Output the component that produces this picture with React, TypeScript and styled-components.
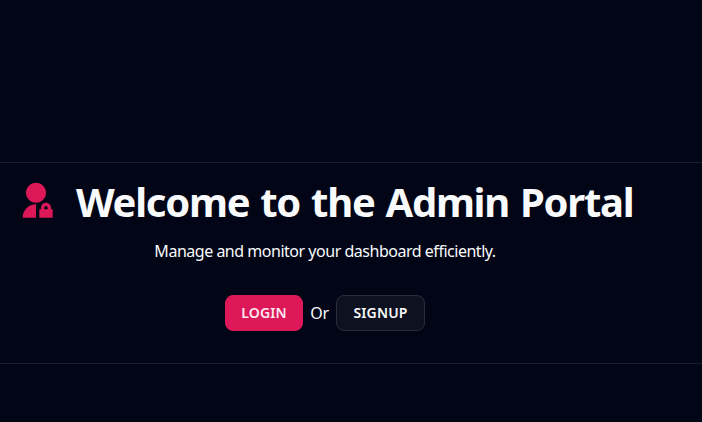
import React from "react";
import styled, { createGlobalStyle } from "styled-components";
import { RiAdminFill } from "react-icons/ri";

const GlobalStyle = createGlobalStyle`
  *, *::before, *::after { box-sizing: border-box; }
  body {
    margin: 0;
    background: #020516;
    color: #f8fafc;
    font-family: "Segoe UI", "Noto Sans", "Open Sans", sans-serif;
  }
`;

const Page = styled.main`
  height: 422px;
  padding-top: 162px;
  overflow: hidden;
`;

const Hero = styled.section`
  height: 202px;
  border-top: 1px solid #1a1d2d;
  border-bottom: 1px solid #1a1d2d;
`;

const Content = styled.div`
  width: 618px;
  margin-left: 16px;
  padding-top: 18px;
  display: flex;
  flex-direction: column;
  align-items: center;
`;

const Heading = styled.div`
  width: 100%;
  height: 40px;
  display: flex;
  align-items: center;
  gap: 20px;
`;

const AdminIcon = styled(RiAdminFill)`
  flex: none;
  width: 40px;
  height: 40px;
  color: #dc1859;
`;

const Title = styled.h1`
  margin: 0;
  padding-top: 2px;
  font-size: 40px;
  line-height: 40px;
  font-weight: 700;
  white-space: nowrap;
  letter-spacing: -1.28px;
  word-spacing: 1.9px;
`;

const Subtitle = styled.p`
  margin: 18px 0 0;
  font-size: 16px;
  line-height: 24px;
  white-space: nowrap;
  letter-spacing: -0.48px;
`;

const Actions = styled.div`
  display: flex;
  align-items: center;
  margin-top: 32px;
  font-size: 16px;
`;

const Conjunction = styled.span`
  width: 33px;
  text-align: center;
  letter-spacing: -0.4px;
`;

const Button = styled.button<{ $primary?: boolean }>`
  width: ${({ $primary }) => ($primary ? 78 : 89)}px;
  height: 36px;
  padding: 0;
  border: 1px solid ${({ $primary }) => ($primary ? "#dc1859" : "#292c3a")};
  border-radius: 8px;
  background: ${({ $primary }) => ($primary ? "#dc1859" : "#0e111f")};
  color: ${({ $primary }) => ($primary ? "#fce7f0" : "#f8fafc")};
  font-family: inherit;
  font-size: 14px;
  line-height: 20px;
  font-weight: 600;
  letter-spacing: 0.15px;
`;

export default function App() {
  return (
    <Page>
      <GlobalStyle />
      <Hero>
        <Content>
          <Heading>
            <AdminIcon />
            <Title>Welcome to the Admin Portal</Title>
          </Heading>
          <Subtitle>Manage and monitor your dashboard efficiently.</Subtitle>
          <Actions>
            <Button $primary>LOGIN</Button>
            <Conjunction>Or</Conjunction>
            <Button>SIGNUP</Button>
          </Actions>
        </Content>
      </Hero>
    </Page>
  );
}
